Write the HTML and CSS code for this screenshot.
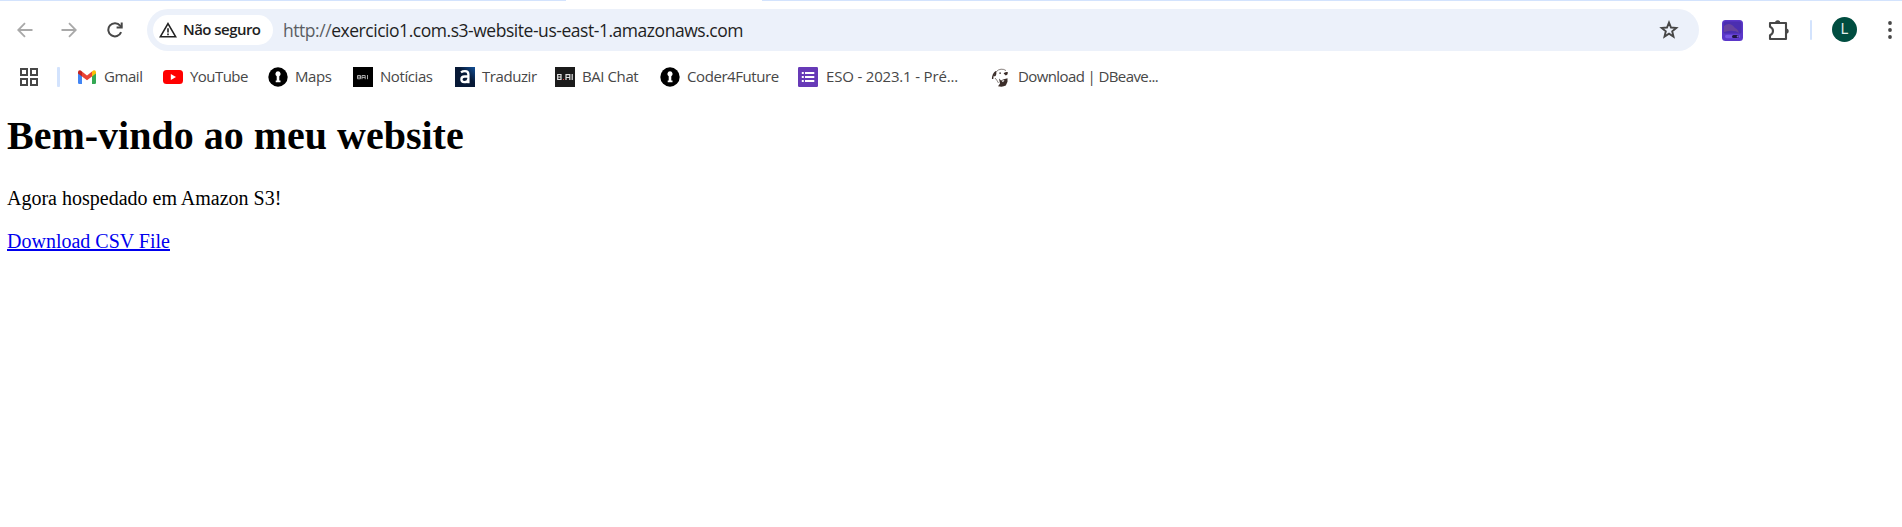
FILE: index.html
```
<!DOCTYPE html>
<html lang="pt">
<head>
<meta charset="utf-8">
<title>Bem-vindo</title>
<link rel="stylesheet" href="styles.css">
</head>
<body>
<div class="tabstrip"><div class="active-tab"></div></div>
<header class="toolbar">
  <svg class="nav back" viewBox="0 0 16 16"><path d="M15.5 8H1.5M8 1.2L1.2 8L8 14.8"/></svg>
  <svg class="nav forward" viewBox="0 0 16 16"><path d="M.5 8H14.5M8 1.2L14.8 8L8 14.8"/></svg>
  <svg class="nav reload" viewBox="0 0 16 16"><path d="M14.1 10.2A6.6 6.6 0 1 1 13.1 3.7L14.6 5.4"/><path d="M14.7.5V5.6H9.6"/></svg>
  <div class="omnibox">
    <div class="chip">
      <svg class="warn" viewBox="0 0 18 16"><path d="M9 1.7L16.6 14.7H1.4Z"/><path d="M9 6.2V10.5M9 11.6V13.2"/></svg>
      <span class="chip-text">Não seguro</span>
    </div>
    <span class="url"><span class="scheme">http://</span>exercicio1.com.s3-website-us-east-1.amazonaws.com</span>
    <svg class="star" viewBox="0 0 20 20"><path d="M10 2.6L12 7.5L17.3 7.9L13.2 11.3L14.5 16.6L10 13.7L5.5 16.6L6.8 11.3L2.7 7.9L8 7.5Z"/></svg>
  </div>
  <svg class="ext" viewBox="0 0 21 21"><rect width="21" height="21" rx="3.5" fill="#5b37c9"/><rect x="1.5" y="1.5" width="18" height="12" rx="1.5" fill="#4b2eb0"/><path d="M2 6Q8 1 13 8Q16 9 17 13Q12 9 2 12Z" fill="#68439f"/><rect x="3" y="14.7" width="15" height="3.6" rx="1.8" fill="#7655e3"/><rect x="10" y="15" width="7" height="3" rx="1.5" fill="#201544"/><circle cx="15.7" cy="16.5" r="1" fill="#7b5ae0"/></svg>
  <svg class="puzzle" viewBox="0 0 22 22"><path class="outline" d="M2 4H18V20H2V16.2Q5 14.8 5 12Q5 9.2 2 7.8Z"/><path class="knob" d="M7 4A2.7 2.7 0 0 1 12.4 4ZM18 9.4A2.7 2.7 0 0 1 18 14.8Z"/></svg>
  <div class="divider"></div>
  <div class="avatar">L</div>
  <svg class="dots" viewBox="0 0 4 18"><circle cx="2" cy="2" r="1.9"/><circle cx="2" cy="9" r="1.9"/><circle cx="2" cy="16" r="1.9"/></svg>
</header>
<nav class="bookmarks">
  <svg class="apps" viewBox="0 0 18 18"><path d="M1 1H7V7H1ZM11 1H17V7H11ZM1 11H7V17H1ZM11 11H17V17H11Z"/></svg>
  <div class="bar"></div>
  <a class="bm gmail"><svg viewBox="0 0 20 20"><path fill="#4285f4" d="M1 5.5L5 8.5V17H2.3Q1 17 1 15.7Z"/><path fill="#34a853" d="M15 8.5L19 5.5V15.7Q19 17 17.7 17H15Z"/><path fill="#ea4335" d="M5 4.6L10 8.4L15 4.6V9.5L10 13.3L5 9.5Z"/><path fill="#c5221f" d="M1 5.3Q1 3.2 2.8 3.2Q3.6 3.2 5 4.6V9.5L1 6.6Z"/><path fill="#fbbc04" d="M19 5.3Q19 3.2 17.2 3.2Q16.4 3.2 15 4.6V9.5L19 6.6Z"/></svg><span>Gmail</span></a>
  <a class="bm youtube"><svg viewBox="0 0 20 20"><rect y="3" width="20" height="14" rx="3.5" fill="#f00"/><path fill="#fff" d="M7.8 7L13 10L7.8 13Z"/></svg><span>YouTube</span></a>
  <a class="bm maps"><svg viewBox="0 0 20 20"><circle cx="10" cy="10" r="9.7"/><path fill="#fff" d="M10 4.3A2.7 2.7 0 0 1 11.3 9.3V13.5H12.5V15.3H7.7V13.5H8.7V9.3A2.7 2.7 0 0 1 10 4.3Z"/></svg><span>Maps</span></a>
  <a class="bm noticias"><svg viewBox="0 0 20 20"><rect width="20" height="20"/><path class="thin" d="M4.5 8.5H7.5V11.8H4.5ZM4.5 10.1H7.5M9 12.2V8.5H12.2V12.2M9 10.4H12.2M14.5 8V12.2"/></svg><span>Notícias</span></a>
  <a class="bm traduzir"><svg viewBox="0 0 20 20"><defs><linearGradient id="navy" x1="1" y1="0" x2="0.3" y2="0.7"><stop offset="0" stop-color="#125099"/><stop offset=".6" stop-color="#071936"/></linearGradient></defs><rect width="20" height="20" fill="url(#navy)"/><path fill="none" stroke="#fff" stroke-width="2.3" d="M6 5.4Q7.5 4.2 10 4.2Q13.4 4.2 13.4 7.5V16.2M13.4 9.5H9.5Q6.4 9.5 6.4 12.3Q6.4 15.2 9.2 15.2Q13 15.2 13.4 12"/></svg><span>Traduzir</span></a>
  <a class="bm baichat"><svg viewBox="0 0 20 20"><rect width="20" height="20" fill="#1b1b1b"/><path class="thick" d="M2.7 7.5H6V12.5H2.7ZM2.7 10H6.4M11 13V7.6H14.8V13M11 10.5H14.8M17.2 7V13"/><path fill="#e33" d="M8 12h1v1H8z"/></svg><span>BAI Chat</span></a>
  <a class="bm coder"><svg viewBox="0 0 20 20"><circle cx="10" cy="10" r="9.7"/><path fill="#fff" d="M10 4.3A2.7 2.7 0 0 1 11.3 9.3V13.5H12.5V15.3H7.7V13.5H8.7V9.3A2.7 2.7 0 0 1 10 4.3Z"/></svg><span>Coder4Future</span></a>
  <a class="bm eso"><svg viewBox="0 0 20 20"><rect width="20" height="20" rx="1.2" fill="#673ab7"/><path fill="#fff" d="M3.8 5h2v2h-2zM7 5h9.3v2H7zM3.8 9h2v2h-2zM7 9h9.3v2H7zM3.8 13h2v2h-2zM7 13h9.3v2H7z"/></svg><span>ESO - 2023.1 - Pré...</span></a>
  <a class="bm dbeaver"><svg viewBox="0 0 20 20"><g fill="none" stroke="#3b2d29"><path stroke-width=".6" d="M5 5Q7 2.5 10 2.2Q13 2 15 3.6"/><path stroke-width="1.4" d="M5 4.5Q1.7 7 1.6 12M4.6 5Q5 8 3.2 9"/><path stroke-width=".6" d="M4 11Q6 13 7.5 16"/></g><path fill="#3b2d29" d="M12.6 6.6Q13.5 4.6 17 5.2L16.4 7.6L14.8 8.4ZM8.3 5.5H10V6.8H8.3ZM8 11.5L10 13.6L12 12.4L16.5 11.2V14.8L14.8 18.6Q11.5 20.3 7 19.2L9 16.6Z"/><path fill="#fff" d="M10.5 13.8L13.5 13L12 15.2Z"/></svg><span>Download | DBeave...</span></a>
</nav>
<main class="page">
  <h1>Bem-vindo ao meu website</h1>
  <p>Agora hospedado em Amazon S3!</p>
  <a class="download" href="#">Download CSV File</a>
</main>
</body>
</html>
```
FILE: styles.css
```
* { box-sizing: border-box; }
body { margin: 0; background: #fff; height: 527px; overflow: hidden; font-family: "Open Sans", "Noto Sans", sans-serif; }
svg { display: block; flex: none; }
.tabstrip { height: 1px; background: #d3e3fd; padding-left: 566px; }
.active-tab { width: 196px; height: 1px; background: #fff; }

.toolbar { display: flex; align-items: center; height: 58px; }
.nav { width: 16px; height: 16px; fill: none; stroke: #474747; stroke-width: 2; }
.back { margin-left: 17px; stroke: #a9a9a9; stroke-width: 1.8; }
.forward { margin-left: 28px; stroke: #a9a9a9; stroke-width: 1.8; }
.reload { margin-left: 30px; }
.omnibox { display: flex; align-items: center; width: 1552px; height: 42px; margin-left: 24px; padding: 0 20px 0 6px; border-radius: 21px; background: #ecf1fa; }
.chip { display: flex; align-items: center; width: 120px; height: 30px; padding-left: 6px; border-radius: 15px; background: #fff; }
.warn { width: 18px; height: 16px; fill: none; stroke: #222; stroke-width: 1.6; }
.chip-text { margin: -2px 0 0 6px; font-size: 15px; font-weight: 600; letter-spacing: -.55px; white-space: nowrap; color: #1f1f1f; }
.url { margin: 0 0 1px 10px; font-size: 17.5px; letter-spacing: -.46px; white-space: nowrap; color: #1f1f1f; }
.scheme { color: #5b5e63; }
.star { width: 20px; height: 20px; margin-left: auto; fill: none; stroke: #474747; stroke-width: 1.9; }
.ext { width: 21px; height: 21px; margin-left: 23px; }
.puzzle { width: 22px; height: 22px; margin: -1px 0 0 25px; }
.outline { fill: none; stroke: #474747; stroke-width: 2.1; stroke-linejoin: round; }
.knob { fill: #474747; }
.divider { width: 2px; height: 20px; margin-left: 20px; border-radius: 1px; background: #d3e3fd; }
.avatar { width: 25px; height: 25px; margin: -1px 0 0 20px; border-radius: 50%; background: #004d40; color: #e4eeec; font: 14px/25px Roboto, sans-serif; text-align: center; }
.dots { width: 4px; height: 18px; margin-left: 31px; fill: #474747; }

.bookmarks { display: flex; align-items: center; height: 36px; }
.apps { width: 18px; height: 18px; margin-left: 20px; fill: none; stroke: #474747; stroke-width: 2; }
.bar { width: 3px; height: 20px; margin: 0 17px 0 19px; border-radius: 1px; background: #d3e3fd; }
.bm { display: flex; align-items: center; flex: none; font-size: 15px; line-height: 20px; white-space: nowrap; letter-spacing: -.42px; color: #474747; }
.bm svg { width: 20px; height: 20px; margin-right: 7px; }
.bm span { padding-bottom: 2px; }
.thin { fill: none; stroke: #bbb; stroke-width: .9; }
.thick { fill: none; stroke: #e2e2e2; stroke-width: 1.2; }
.gmail { width: 86px; }
.youtube { width: 105px; letter-spacing: -.55px; }
.maps { width: 85px; }
.noticias { width: 102px; }
.traduzir { width: 100px; }
.baichat { width: 105px; }
.coder { width: 138px; }
.eso { width: 193px; letter-spacing: -.18px; }
.bm.eso svg { margin-right: 8px; }
.dbeaver { letter-spacing: -.6px; }

.page { padding: 18px 7px 0; font-family: "Liberation Serif", serif; font-size: 20px; line-height: 23px; color: #000; }
.page h1 { margin: 0; font-size: 40px; line-height: 46px; font-weight: bold; }
.page p { margin: 28px 0 20px; }
.download { color: #00e; text-decoration: underline; text-decoration-thickness: 2px; }
```
